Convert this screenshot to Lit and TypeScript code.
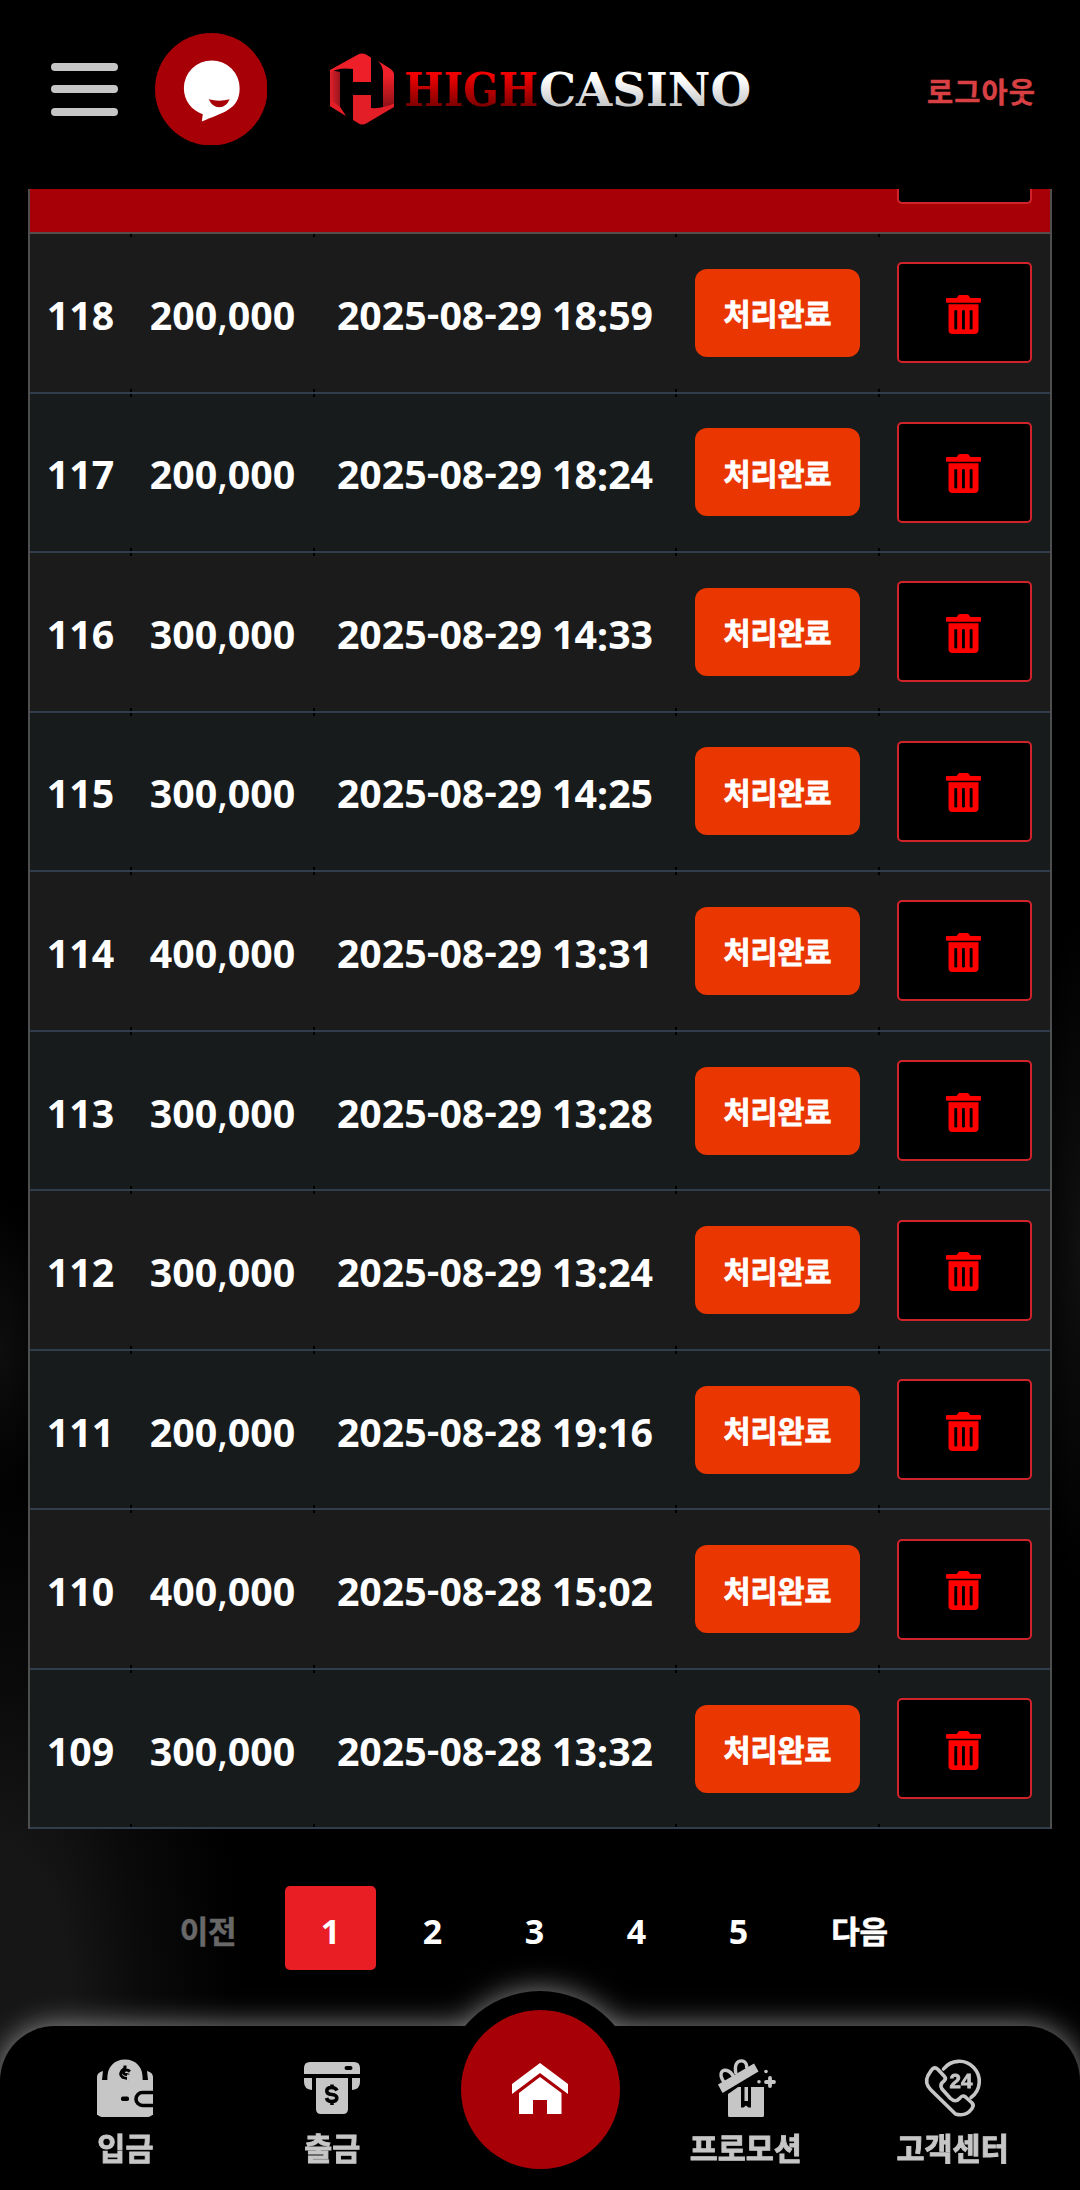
import { LitElement, html, css, svg } from 'lit';
import { customElement } from 'lit/decorators.js';

interface Row { no: number; amount: string; date: string; }

const ROWS: Row[] = [
  { no: 118, amount: '200,000', date: '2025-08-29 18:59' },
  { no: 117, amount: '200,000', date: '2025-08-29 18:24' },
  { no: 116, amount: '300,000', date: '2025-08-29 14:33' },
  { no: 115, amount: '300,000', date: '2025-08-29 14:25' },
  { no: 114, amount: '400,000', date: '2025-08-29 13:31' },
  { no: 113, amount: '300,000', date: '2025-08-29 13:28' },
  { no: 112, amount: '300,000', date: '2025-08-29 13:24' },
  { no: 111, amount: '200,000', date: '2025-08-28 19:16' },
  { no: 110, amount: '400,000', date: '2025-08-28 15:02' },
  { no: 109, amount: '300,000', date: '2025-08-28 13:32' },
];

const trash = html`<svg class="trash" viewBox="0 0 35 39">
  <path fill="#fe0000" d="M10.700 3 12.200 .8Q12.700 0 13.700 0h7.600q1 0 1.500 .8L24.300 3H34q1 0 1 1v2.700q0 1-1 1H1q-1 0-1-1V4q0-1 1-1z"/>
  <path fill="#fe0000" d="M2.500 9.300h30v25.700q0 4-4 4h-22q-4 0-4-4z"/>
  <g fill="#000"><rect x="8.300" y="15" width="2.900" height="19.500" rx="1.200"/><rect x="16" y="15" width="2.900" height="19.500" rx="1.200"/><rect x="23.700" y="15" width="2.900" height="19.500" rx="1.200"/></g>
</svg>`;

const depositIcon = svg`
  <path fill="#c6c6c6" d="M1 18q0-4.500 6-6l-1 9h5c0-13 7-20.500 18-20.500s18 7.500 18 20.500h5l-1-9q6 1.500 6 6v38H1z"/>
  <rect x="1" y="30" width="56" height="28" rx="5" fill="#c6c6c6"/>
  <path d="M58 33.500H46.500a6.500 6.500 0 0 0 0 13H58" fill="none" stroke="#000" stroke-width="3.600"/>
  <rect x="25" y="37.500" width="8" height="4.500" rx="1.800" fill="#000"/>
  <path d="M34 12.500Q31 10 28.500 11.500C26 13.500 28 15.500 30.500 15.500Q33.500 16 33 19M29 6.500v5" fill="none" stroke="#000" stroke-width="3"/>
  <path d="M28.500 9.500Q21.500 14.500 27 18.500L33 20" fill="none" stroke="#000" stroke-width="2.800"/>
  <path d="M31 15.500h4.500v6H31z" fill="#c6c6c6"/>
  <path d="M9.500 12v9M48.500 12v9" stroke="#000" stroke-width="3.600"/>`;

const withdrawIcon = svg`
  <path fill="#c6c6c6" fill-rule="evenodd" d="M1 15V9q0-6 6-6h44q6 0 6 6v6zM43.500 7q-2 0-2 2t2 2h4q2 0 2-2t-2-2z"/>
  <path fill="#c6c6c6" d="M1 19h8v12q-8-.5-8-8zM49 19h8v4q0 7.500-8 8zM13 19h32v31q0 5-5 5H18q-5 0-5-5z"/>
  <path d="M34 31.500q-1.500-3-5.500-3-4.700 0-4.700 3.500 0 3 5 3.500t5 3.500q0 3.500-5.300 3.500-4 0-5-3.500M29 25.500v4M29 42v4" fill="none" stroke="#000" stroke-width="3.600"/>`;

const promoIcon = svg`
  <g fill="none" stroke="#c6c6c6" stroke-width="3.400">
    <path d="M7 23C1 15 5 10 10 11.500c4 1 6 5 7 7"/>
    <path d="M19 15C17 6 20 1.900 24.500 1.900c4.500 0 6 5 5 8"/>
  </g>
  <path fill="#c6c6c6" d="M1 25.500 37 4.500l4.500 8L5.500 34z"/>
  <path fill="#c6c6c6" d="M11 35l8-5.500 2-1.500h3v20.500h2.500l2.500-2 2.500 2H34V28h13v28.500q0 1.500-1.500 1.500H12.500Q11 58 11 56.500zM27.500 28h3.500v14h-3.500z"/>
  <path fill="none" stroke="#c6c6c6" stroke-width="3.800" stroke-linecap="round" d="M53 19v8M49 23h8"/>
  <circle cx="49" cy="12.500" r="1.800" fill="#c6c6c6"/><circle cx="42" cy="22.800" r="1.800" fill="#c6c6c6"/>`;

const supportIcon = svg`
  <g fill="none" stroke="#c6c6c6" stroke-width="3.600" stroke-linecap="round" stroke-linejoin="round">
    <path d="M19.500 10A20 20 0 1 1 47 38.500"/>
    <path d="M4 16.500 7.500 11q3-4 6.500-.5l6.500 7q2 2-.5 4.500-5 3.500-2 8l8.500 9.500q5 4.500 9 0 3-4 6-1.500l6 5.500q3 2.500.5 6-6 8.500-16.500 5.500L7 31Q0 24 4 16.500z"/>
  </g>
  <text class="n24" x="25.500" y="28.500">24</text>`;

const MARKS: Record<string, string> = { ',': 'comma', ':': 'colon', '-': 'dash' };
const punct = (s: string) => s.split(/([,:-])/).map((p) => (MARKS[p] ? html`<span class=${MARKS[p]}>${p}</span>` : p));

@customElement('app-root')
export class AppRoot extends LitElement {
  static styles = css`
    :host {
      display: block;
      font-family: 'Noto Sans', 'Noto Sans CJK KR', sans-serif;
      font-weight: 700;
      color: #fff;
    }
    * { box-sizing: border-box; }
    .page {
      height: 2190px;
      overflow: hidden;
      display: flex;
      flex-direction: column;
      background:
        radial-gradient(ellipse 240px 560px at 0 2020px, #161616 0 30%, #0a0a0a 60%, transparent 100%),
        radial-gradient(ellipse 60px 150px at 0 1350px, #0e0e0e, transparent 100%),
        radial-gradient(ellipse 50px 330px at 1080px 1250px, #101010, transparent 100%),
        #000;
    }
    .top {
      height: 189px;
      flex: none;
      background: #000;
      display: flex;
      align-items: center;
      padding: 0 44px 11px 51px;
    }
    .menu { width: 67px; height: 53px; display: flex; flex-direction: column; justify-content: space-between; }
    .bar { height: 8px; border-radius: 4px; background: #c6c6c6; }
    .chat { width: 112.500px; height: 112.500px; margin-left: 36.700px; }
    .logo { width: 422px; height: 72px; margin-left: 62.800px; }
    .wordmark { font: 700 46px 'DejaVu Serif', serif; }
    .logout { margin-left: auto; margin-top: 3px; color: #d84044; font-size: 28.500px; white-space: nowrap; letter-spacing: 1px; -webkit-text-stroke: .4px; }
    .board { width: 1024px; margin-left: 28px; border: 2px solid #4e4e4e; border-top: 0; border-bottom: 0; flex: none; }
    .line { display: grid; grid-template-columns: 102px 183px 362px 203px 170px; align-items: center; justify-items: center; }
    .head { height: 45px; background: #a70007; border-bottom: 2px solid #574b4b; align-items: start; }
    .headbtn { grid-column: 5; width: 135px; height: 15px; background: #000; border: 2px solid #d0232a; border-top: 0; border-radius: 0 0 5px 5px; margin-right: 1px; }
    .row { height: 159.550px; border-bottom: 2px solid #303d4d; background: #1b1b1b; font-size: 39.300px; white-space: nowrap; }
    .row:nth-child(odd) { background: #171b1c; }
    .cell { display: flex; align-items: center; justify-content: center; width: 100%; height: 100%; padding-right: 1px; }
    .cell.tick {
      padding-right: 2px;
      background:
        linear-gradient(#000, #000) right top / 2px 3px no-repeat,
        linear-gradient(#000, #000) right bottom / 2px 3px no-repeat;
    }
    .cell.id { padding-right: 1px; }
    .num { padding-top: 4px; }
    .comma { font-weight: 500; }
    .colon { position: relative; top: 2px; }
    .dash { position: relative; top: -2px; font-weight: 600; }
    .badge { width: 165px; height: 88px; border-radius: 12px; background: #ea3600; display: flex; align-items: center; justify-content: center; font-size: 29.300px; font-family: 'Noto Sans CJK KR', sans-serif; font-weight: 700; -webkit-text-stroke: .8px; padding-bottom: 1px; }
    .del { width: 135px; height: 101px; border: 2px solid #d0232a; border-radius: 5px; background: #000; display: flex; align-items: center; justify-content: center; padding: 3px 2px 0 0; }
    .trash { width: 35px; height: 39px; }
    .pager { display: flex; height: 84px; margin: 56.500px 0 0 161px; flex: none; align-items: center; font-size: 34px; }
    .pg { width: 91px; height: 84px; margin-right: 11px; border-radius: 5px; display: flex; align-items: center; justify-content: center; padding-top: 6px; }
    .on { background: #e91e25; }
    .word { font-family: 'Noto Sans CJK KR', sans-serif; font-size: 31px; padding-top: 3px; letter-spacing: -0.200px; -webkit-text-stroke: .6px; }
    .prev { width: 94px; margin-right: 30px; color: #686868; }
    .next { width: 129px; }
    .dock { position: relative; flex: none; height: 164px; margin-top: auto; filter: drop-shadow(0 0 15px rgba(255, 255, 255, .55)); }
    .hump { position: absolute; left: 442px; top: -35px; width: 196px; height: 196px; border-radius: 50%; background: #000; }
    .tabs { position: relative; height: 100%; background: #000; border-radius: 55px 55px 0 0; display: grid; grid-template-columns: repeat(5, 1fr); padding: 32.500px 24px 0 22px; }
    .tab { display: flex; flex-direction: column; align-items: center; color: #c6c6c6; font: 700 30.500px/40px 'Noto Sans CJK KR', sans-serif; gap: 10px; white-space: nowrap; }
    .lbl { -webkit-text-stroke: .9px; }
    .ico { width: 58px; height: 58px; overflow: visible; }
    .n24 { font: 700 20.500px 'Liberation Sans', sans-serif; fill: #c6c6c6; stroke: #c6c6c6; stroke-width: .8px; }
    .home { position: absolute; left: 460.500px; top: -16px; width: 159px; height: 159px; border-radius: 50%; background: #a70007; display: flex; align-items: center; justify-content: center; padding-bottom: 3px; }
    .house { width: 56px; height: 51px; }
  `;

  private tab(icon: unknown, label: string) {
    return html`<div class="tab"><svg class="ico" viewBox="0 0 58 58">${icon}</svg><span class="lbl">${label}</span></div>`;
  }

  render() {
    return html`
      <div class="page">
        <header class="top">
          <div class="menu"><i class="bar"></i><i class="bar"></i><i class="bar"></i></div>
          <svg class="chat" viewBox="0 0 113 113">
            <circle cx="56.500" cy="56.500" r="56.500" fill="#a70007"/>
            <path fill="#fff" d="M57 27.500a28 28 0 0 1 28 28c0 22-17 24-38 33.500l1-7.500C37 78 29 68 29 55.500a28 28 0 0 1 28-28z"/>
            <path fill="#a70007" d="M54 66.500q10.500 3 21 0-3.500 8-10.500 8T54 66.500z"/>
          </svg>
          <svg class="logo" viewBox="0 0 422 72">
            <defs>
              <linearGradient id="r" x2="0" y2="1"><stop offset=".25" stop-color="#f00000"/><stop offset=".9" stop-color="#6b0000"/></linearGradient>
              <linearGradient id="w" x2="0" y2="1"><stop offset=".3" stop-color="#fff"/><stop offset=".9" stop-color="#bdbdbd"/></linearGradient>
              <linearGradient id="a"><stop stop-color="#e0202a"/><stop offset="1" stop-color="#6d0e12"/></linearGradient>
              <linearGradient id="b" x2="0" y2="1"><stop offset=".3" stop-color="#f0202a"/><stop offset="1" stop-color="#8c1015"/></linearGradient>
            </defs>
            <path fill="url(#a)" d="M0 17 10 19V54L16 63 0 53z"/>
            <path fill="#ee1f28" d="M0 17 28 1.500q4-2 8 0l5 3V29H23V16Q7 14 0 20z"/>
            <path fill="url(#b)" d="M48 8 60 15.500q4 3 4 6V50l-11 5V18Q52 12 48 8z"/>
            <path fill="#e41e27" d="M23 42H41V55q12 1 23-5v4L37 70q-5 3-9 0l-5-3z"/>
            <path fill="#e41e27" d="M0 46 10 54 16 63 0 53z"/>
            <text class="wordmark" x="74" y="52.500" textLength="134" lengthAdjust="spacingAndGlyphs" fill="url(#r)">HIGH</text>
            <text class="wordmark" x="209" y="52.500" textLength="212" lengthAdjust="spacingAndGlyphs" fill="url(#w)">CASINO</text>
          </svg>
          <span class="logout">로그아웃</span>
        </header>
        <main class="board">
          <div class="line head"><i class="headbtn"></i></div>
          ${ROWS.map((r) => html`
            <div class="line row">
              <div class="cell tick id"><span class="num">${r.no}</span></div>
              <div class="cell tick"><span class="num">${punct(r.amount)}</span></div>
              <div class="cell tick"><span class="num">${punct(r.date)}</span></div>
              <div class="cell tick"><span class="badge">처리완료</span></div>
              <div class="cell"><span class="del">${trash}</span></div>
            </div>`)}
        </main>
        <nav class="pager">
          <span class="pg word prev">이전</span>
          ${[1, 2, 3, 4, 5].map((n) => html`<span class="pg ${n === 1 ? 'on' : ''}">${n}</span>`)}
          <span class="pg word next">다음</span>
        </nav>
        <footer class="dock">
          <div class="hump"></div>
          <div class="tabs">
            ${this.tab(depositIcon, '입금')}
            ${this.tab(withdrawIcon, '출금')}
            <span></span>
            ${this.tab(promoIcon, '프로모션')}
            ${this.tab(supportIcon, '고객센터')}
          </div>
          <div class="home">
            <svg class="house" viewBox="0 0 56 51">
              <path fill="#fff" d="M0 21 28 0 56 21v10L28 10 0 31zM7 30 28 14 49.500 30V51H35V37H21V51H7z"/>
            </svg>
          </div>
        </footer>
      </div>`;
  }
}
